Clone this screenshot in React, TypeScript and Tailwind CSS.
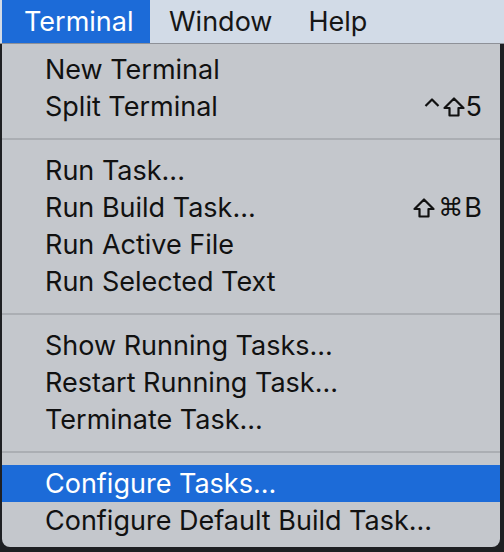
import React from "react";

type Item = { label: string; shortcut?: "split" | "build"; active?: boolean };

const groups: Item[][] = [
  [{ label: "New Terminal" }, { label: "Split Terminal", shortcut: "split" }],
  [
    { label: "Run Task..." },
    { label: "Run Build Task...", shortcut: "build" },
    { label: "Run Active File" },
    { label: "Run Selected Text" },
  ],
  [
    { label: "Show Running Tasks..." },
    { label: "Restart Running Task..." },
    { label: "Terminate Task..." },
  ],
  [{ label: "Configure Tasks...", active: true }, { label: "Configure Default Build Task..." }],
];

function Shift() {
  return (
    <svg width="22" height="20" viewBox="0 0 22 20" className="shrink-0">
      <path
        d="M11 1.5 L20.5 11 H15.5 V18.5 H6.5 V11 H1.5 Z"
        fill="none"
        stroke="#111"
        strokeWidth="2.2"
        strokeLinejoin="round"
      />
    </svg>
  );
}

function Caret() {
  return (
    <svg width="16" height="20" viewBox="0 0 16 20" className="shrink-0">
      <path d="M1.5 9 L8 2.5 L14.5 9" fill="none" stroke="#111" strokeWidth="2.2" strokeLinejoin="round" />
    </svg>
  );
}

function Shortcut({ kind }: { kind: "split" | "build" }) {
  if (kind === "split") {
    return (
      <span className="flex items-center">
        <Caret />
        <span className="w-[3px]" />
        <Shift />
        <span className="ml-[1px]">5</span>
      </span>
    );
  }
  return (
    <span className="flex items-center">
      <Shift />
      <span className="ml-[3px] mr-[1px] font-['DejaVu_Sans',sans-serif] text-[25px]">⌘</span>
      <span>B</span>
    </span>
  );
}

function Row({ item }: { item: Item }) {
  return (
    <div
      className={`flex h-[37px] items-center justify-between pl-[43px] pr-[18px] ${
        item.active ? "bg-[#1c6bd8] text-white" : "text-[#111]"
      }`}
    >
      <span>{item.label}</span>
      {item.shortcut && <Shortcut kind={item.shortcut} />}
    </div>
  );
}

export default function App() {
  return (
    <div
      className="h-[552px] w-[504px] overflow-hidden bg-[#1e1f22] text-[27px] leading-none"
      style={{ fontFamily: "Inter, 'Liberation Sans', sans-serif" }}
    >
      <div className="flex h-[44px] items-stretch border-b border-[#8e9198] bg-[#d2dbe7] text-[#161616]">
        <div className="ml-[2px] flex w-[148px] items-center bg-[#1c6bd8] pl-[22px] text-white">Terminal</div>
        <div className="flex items-center pl-[19px]">Window</div>
        <div className="flex items-center pl-[36px]">Help</div>
      </div>
      <div className="ml-[2px] mr-[4px] h-[503px] rounded-b-[8px] bg-[#c4c7cc] pt-[7px]">
        {groups.map((g, gi) => (
          <div key={gi}>
            {gi > 0 && (
              <div className="flex h-[27px] items-center">
                <div className="h-[2px] w-full bg-[#abaeb3]" />
              </div>
            )}
            {g.map((it) => (
              <Row key={it.label} item={it} />
            ))}
          </div>
        ))}
      </div>
    </div>
  );
}
